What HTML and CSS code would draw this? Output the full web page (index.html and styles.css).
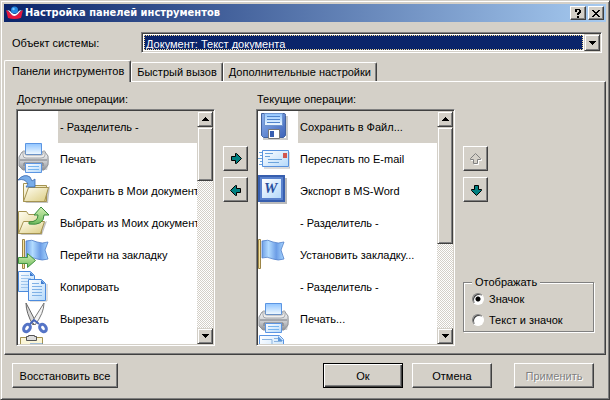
FILE: index.html
```html
<!DOCTYPE html>
<html lang="ru">
<head>
<meta charset="utf-8">
<title>Настройка панелей инструментов</title>
<link rel="stylesheet" href="styles.css">
</head>
<body>
<svg class="sprite" aria-hidden="true">
  <defs>
    <linearGradient id="blue" x1="0" y1="0" x2="0" y2="1"><stop offset="0" stop-color="#8fc4ff"/><stop offset="1" stop-color="#f2faff"/></linearGradient>
    <linearGradient id="paper" x1="0" y1="0" x2="1" y2="1"><stop offset="0" stop-color="#ffffff"/><stop offset="1" stop-color="#b4d9fb"/></linearGradient>
    <linearGradient id="metal" x1="0" y1="0" x2="0" y2="1"><stop offset="0" stop-color="#f6f6f6"/><stop offset=".55" stop-color="#c9cbce"/><stop offset="1" stop-color="#8d9095"/></linearGradient>
    <linearGradient id="folder" x1="0" y1="0" x2="1" y2="1"><stop offset="0" stop-color="#fffdf0"/><stop offset="1" stop-color="#dccd83"/></linearGradient>
    <linearGradient id="cloth" x1="0" y1="0" x2="1" y2="0"><stop offset="0" stop-color="#6fa0e6"/><stop offset=".3" stop-color="#b3dcff"/><stop offset=".65" stop-color="#6c9de6"/><stop offset="1" stop-color="#a8d6ff"/></linearGradient>
    <linearGradient id="disk" x1="0" y1="0" x2="1" y2="1"><stop offset="0" stop-color="#8fb4ee"/><stop offset="1" stop-color="#3c62b8"/></linearGradient>
    <linearGradient id="green" x1="0" y1="0" x2="0" y2="1"><stop offset="0" stop-color="#d3f0b4"/><stop offset="1" stop-color="#6fbb5c"/></linearGradient>
  </defs>
  <symbol id="printer" viewBox="0 0 32 32">
    <path d="M3 27h26l2-9-1-6-3-1z" fill="#999" opacity=".5"/>
    <path d="M4 9h23l3 4v9l-4 5H5l-4-4v-9z" fill="url(#metal)" stroke="#92959a"/>
    <path d="M7.500.500h16v11h-16z" fill="url(#blue)" stroke="#5b95e2"/>
    <path d="M5 8v4q0 3 3 3h15q4 0 4-3V8h-2v3q0 1-2 1H9q-2 0-2-1V8z" fill="#eee" stroke="#8b8e93" stroke-width=".7"/>
    <path d="M2 17h27M6 23v-3h19v3" fill="none" stroke="#777b82"/>
    <path d="M7.500 20.500h16v9h-16z" fill="url(#paper)" stroke="#5b95e2"/>
    <path d="M10 23.500h11M10 26.500h11" stroke="#76b4f0"/>
  </symbol>
  <symbol id="folder-in" viewBox="0 0 32 32">
    <path d="M7 28h23l2-17z" fill="#888" opacity=".5"/>
    <path d="M5.500 26.500V8.500h8l2 2h13v16z" fill="url(#folder)" stroke="#a49351"/>
    <path d="M5.500 26.500l5-14h20l-4 14z" fill="url(#folder)" stroke="#a49351"/>
    <path d="M0 5Q6-2 12 2l2 4 3-2v8H8l2-3Q7 3 0 5z" fill="#78ade9" stroke="#3868b0" stroke-width=".8"/>
  </symbol>
  <symbol id="folder-out" viewBox="0 0 32 32">
    <path d="M2 28h22l5-14z" fill="#888" opacity=".5"/>
    <path d="M.500 26.500v-22h8l2 3h13v19z" fill="url(#folder)" stroke="#a49351"/>
    <path d="M.500 26.500l5-12h21l-4 12z" fill="url(#folder)" stroke="#a49351"/>
    <path d="M11 15Q20 15 20 8h-4l7-8 8 8h-5q0 11-15 9z" fill="url(#green)" stroke="#398a3d"/>
  </symbol>
  <symbol id="flag-go" viewBox="0 0 32 32">
    <path d="M4.500.500h2v29h-2z" fill="#f6e4a0" stroke="#9c8547"/>
    <path d="M8 2q6-2 11 1 5 2 11 0l-3 8 3 9q-6 2-11 0-6-3-11-1z" fill="url(#cloth)" stroke="#517fc9" stroke-width=".8"/>
    <path d="M.500 18.500h9v-4l8 7-8 7v-4h-9z" fill="url(#green)" stroke="#439542"/>
  </symbol>
  <symbol id="flag" viewBox="0 0 32 32">
    <path d="M.500.500h2v29h-2z" fill="#f6e4a0" stroke="#9c8547"/>
    <path d="M4 2q6-2 11 1 5 2 11 0l-3 8 3 9q-6 2-11 0-6-3-11-1z" fill="url(#cloth)" stroke="#517fc9" stroke-width=".8"/>
  </symbol>
  <symbol id="copy" viewBox="0 0 32 32">
    <path d="M.500.500h12l4 4v16H.500z" fill="url(#paper)" stroke="#4c8bdd"/>
    <path d="M12 1v4h4z" fill="#3d7bd0"/><path d="M3 4.500h8M3 7.500h10M3 10.500h10M3 13.500h8M3 16.500h8" stroke="#9fc5ec"/>
    <path d="M12 30h17V13" fill="none" stroke="#999" opacity=".6"/>
    <path d="M10.500 8.500h13l4 4v17h-17z" fill="url(#paper)" stroke="#4c8bdd"/>
    <path d="M23 9v4h4z" fill="#3d7bd0"/><path d="M14 12.500h7M14 15.500h10M14 18.500h10M14 21.500h10M14 24.500h10" stroke="#7fb1e6"/>
  </symbol>
  <symbol id="cut" viewBox="0 0 32 32">
    <path d="M8 0l10 19-3 3Q8 10 8 0z" fill="#d8d8d8" stroke="#666"/>
    <path d="M26 0L14 19l3 3Q26 10 26 0z" fill="#f4f4f4" stroke="#777"/>
    <ellipse cx="9" cy="25" rx="3" ry="4" transform="rotate(35 9 25)" fill="none" stroke="#5574c6" stroke-width="3"/>
    <ellipse cx="25" cy="25" rx="3" ry="4" transform="rotate(-35 25 25)" fill="none" stroke="#5574c6" stroke-width="3"/>
    <path d="M12 21l4-4 5 4" fill="none" stroke="#4565b9" stroke-width="2"/>
  </symbol>
  <symbol id="paste" viewBox="0 0 32 32">
    <path d="M2.500 2.500h22v27h-22z" fill="#fbf6d8" stroke="#a49351"/>
    <path d="M8.500 1.500h2v-1h6v1h2v4h-10z" fill="#ddd" stroke="#555"/><path d="M12 9h13v18H12z" fill="url(#paper)" stroke="#4c8bdd"/>
  </symbol>
  <symbol id="save" viewBox="0 0 32 32">
    <path d="M5 28h24V5" fill="none" stroke="#999" stroke-width="2" opacity=".5"/>
    <path d="M3.500 2.500h23q1 0 1 2v20l-2 2h-20l-2-2z" fill="url(#disk)" stroke="#41629f"/>
    <path d="M6.500 2.500h18v12h-18z" fill="url(#blue)" stroke="#6f95cf"/>
    <path d="M9 5.500h13M9 8.500h13M9 11.500h13" stroke="#4f84cc"/>
    <path d="M10.500 18.500h11v9h-11z" fill="#fff" stroke="#777"/><path d="M12 20h4v6h-4z" fill="#385eb0"/>
  </symbol>
  <symbol id="mail" viewBox="0 0 32 32">
    <path d="M6 25h26V9" fill="none" stroke="#888" opacity=".6"/>
    <path d="M4.500 7.500h26v16h-26z" fill="url(#paper)" stroke="#5791dd"/>
    <path d="M1 9.500h3M2 12.500h2M0 15.500h4M2 18.500h2M1 21.500h3M7 10.500h8M7 13.500h5M10 16.500h14M10 19.500h11" stroke="#6ca4dc"/>
    <path d="M25 10h4v5h-4z" fill="#d2564e"/>
  </symbol>
  <symbol id="word" viewBox="0 0 32 32">
    <path d="M2 28h26V3" fill="none" stroke="#777" stroke-width="2" opacity=".5"/>
    <path d="M1 1h25v25H1z" fill="#5a82cd" stroke="#365eae" stroke-width="2"/>
    <path d="M4 4h19v19H4z" fill="url(#paper)"/>
    <text class="word-mark" x="6" y="18">W</text>
  </symbol>
  <symbol id="preview" viewBox="0 0 32 32">
    <path d="M1.500.500h20l4 4v24h-24z" fill="url(#paper)" stroke="#5b95e2"/><path d="M4 4.500h10v8H4M16 3.500h4M16 6.500h8" fill="none" stroke="#8cb4df"/><path d="M20 1v5h5z" fill="#5c98dd"/>
  </symbol>
  <symbol id="arrow" viewBox="0 0 12 12"><path d="M1.500 3.500h4v-3h1l5 5-5 5h-1v-3h-4z"/></symbol>
  <symbol id="tri-up" viewBox="0 0 7 4"><path d="M3 0h1v1h1v1h1v1h1v1H0V3h1V2h1V1h1z"/></symbol>
  <symbol id="tri-down" viewBox="0 0 7 4"><path d="M3 4h1V3h1V2h1V1h1V0H0v1h1v1h1v1h1z"/></symbol>
</svg>

<main class="dialog">
  <header class="titlebar">
    <svg class="logo" viewBox="0 0 17 14" aria-hidden="true"><path d="M0 4q3 1 5 4 4 3 7 0 2-3 5-4l-2 8q-7 2-13 0z" fill="#e5173d"/><path d="M1 4q3 0 5 3 3 2 5 0 2-3 5-3-2 1-4 4-4 4-7 0Q3 5 1 4z" fill="#fff"/><circle cx="8.500" cy="4" r="3.500" fill="#2489e0"/><circle cx="7.500" cy="3" r="1.200" fill="#7cc5ff"/></svg>
    <h1>Настройка панелей инструментов</h1>
    <button class="caption-btn" type="button" aria-label="Справка"><svg viewBox="0 0 8 9"><path d="M1 0h5v1h1v3H6v1H5v1H3V4h1V3h1V1H3v2H1zM3 7h2v2H3z"/></svg></button>
    <button class="caption-btn" type="button" aria-label="Закрыть"><svg viewBox="0 0 8 9"><path d="M0 1h2v1h1v1h2V2h1V1h2v1H7v1H6v1H5v1h1v1h1v1h1v1H6V7H5V6H3v1H2v1H0V7h1V6h1V5h1V4H2V3H1V2H0z"/></svg></button>
  </header>

  <div class="object-row">
    <label for="object">Объект системы:</label>
    <div class="combo">
      <select id="object"><option>Документ: Текст документа</option></select>
      <span class="combo-arrow"><svg class="tri"><use href="#tri-down"/></svg></span>
    </div>
  </div>

  <div class="tabs" role="tablist">
    <button class="tab active" type="button" role="tab" aria-selected="true">Панели инструментов</button>
    <button class="tab" type="button" role="tab">Быстрый вызов</button>
    <button class="tab" type="button" role="tab">Дополнительные настройки</button>
  </div>

  <section class="panel" role="tabpanel">
    <div class="column">
      <h2 id="available">Доступные операции:</h2>
      <div class="listbox">
        <ul role="listbox" aria-labelledby="available">
          <li role="option" aria-selected="true"><span class="icon"></span><span class="name">- Разделитель -</span></li>
          <li role="option"><svg class="icon"><use href="#printer"/></svg><span class="name">Печать</span></li>
          <li role="option"><svg class="icon"><use href="#folder-in"/></svg><span class="name">Сохранить в Мои документ</span></li>
          <li role="option"><svg class="icon"><use href="#folder-out"/></svg><span class="name">Выбрать из Моих документ</span></li>
          <li role="option"><svg class="icon"><use href="#flag-go"/></svg><span class="name">Перейти на закладку</span></li>
          <li role="option"><svg class="icon"><use href="#copy"/></svg><span class="name">Копировать</span></li>
          <li role="option"><svg class="icon"><use href="#cut"/></svg><span class="name">Вырезать</span></li>
          <li role="option"><svg class="icon"><use href="#paste"/></svg></li>
        </ul>
        <div class="scrollbar">
          <button type="button" aria-label="Вверх"><svg class="tri"><use href="#tri-up"/></svg></button>
          <div class="track"><div class="thumb short"></div></div>
          <button type="button" aria-label="Вниз"><svg class="tri"><use href="#tri-down"/></svg></button>
        </div>
      </div>
    </div>

    <div class="arrows">
      <button type="button" aria-label="Добавить"><svg class="arrow"><use href="#arrow"/></svg></button>
      <button type="button" aria-label="Убрать"><svg class="arrow left"><use href="#arrow"/></svg></button>
    </div>

    <div class="column">
      <h2 id="current">Текущие операции:</h2>
      <div class="listbox">
        <ul role="listbox" aria-labelledby="current">
          <li role="option" aria-selected="true"><svg class="icon"><use href="#save"/></svg><span class="name">Сохранить в Файл...</span></li>
          <li role="option"><svg class="icon"><use href="#mail"/></svg><span class="name">Переслать по E-mail</span></li>
          <li role="option"><svg class="icon"><use href="#word"/></svg><span class="name">Экспорт в MS-Word</span></li>
          <li role="option"><span class="icon"></span><span class="name">- Разделитель -</span></li>
          <li role="option"><svg class="icon"><use href="#flag"/></svg><span class="name">Установить закладку...</span></li>
          <li role="option"><span class="icon"></span><span class="name">- Разделитель -</span></li>
          <li role="option"><svg class="icon"><use href="#printer"/></svg><span class="name">Печать...</span></li>
          <li role="option"><svg class="icon"><use href="#preview"/></svg></li>
        </ul>
        <div class="scrollbar">
          <button type="button" aria-label="Вверх"><svg class="tri"><use href="#tri-up"/></svg></button>
          <div class="track"><div class="thumb long"></div></div>
          <button type="button" aria-label="Вниз"><svg class="tri"><use href="#tri-down"/></svg></button>
        </div>
      </div>
    </div>

    <div class="side">
      <div class="arrows">
        <button type="button" aria-label="Выше" disabled><svg class="arrow up"><use href="#arrow"/></svg></button>
        <button type="button" aria-label="Ниже"><svg class="arrow down"><use href="#arrow"/></svg></button>
      </div>
      <fieldset>
        <legend>Отображать</legend>
        <label><input type="radio" name="view" checked>Значок</label>
        <label><input type="radio" name="view">Текст и значок</label>
      </fieldset>
    </div>
  </section>

  <footer>
    <button class="push restore" type="button">Восстановить все</button>
    <button class="push default" type="button">Ок</button>
    <button class="push" type="button">Отмена</button>
    <button class="push apply" type="button" disabled>Применить</button>
  </footer>
</main>
</body>
</html>
```
FILE: styles.css
```css
* { box-sizing: border-box; }

:root {
  --face: #d4d0c8;
  --shadow: #808080;
  --dark: #404040;
  --navy: #0a246a;
}

body {
  margin: 0;
  background: var(--face);
  color: #000;
  font: 11px/16px "Liberation Sans", Arial, sans-serif;
}

.sprite { position: absolute; width: 0; height: 0; }

.dialog {
  display: flex;
  flex-direction: column;
  height: 100vh;
  padding: 2px;
  border: 1px solid var(--face);
  border-right-color: var(--dark);
  border-bottom-color: var(--dark);
  box-shadow: inset 1px 1px #fff, inset -1px -1px var(--shadow);
}

button {
  display: flex;
  align-items: center;
  justify-content: center;
  margin: 0;
  padding: 0;
  font: inherit;
  color: #000;
  background: var(--face);
  border: 1px solid;
  border-color: #fff var(--dark) var(--dark) #fff;
  box-shadow: inset -1px -1px var(--shadow);
}

.titlebar {
  display: flex;
  align-items: center;
  gap: 2px;
  height: 18px;
  margin: 1px;
  padding: 0 2px;
  background: linear-gradient(90deg, var(--navy), #a6caf0);
}

.logo { width: 17px; height: 14px; }

h1 {
  flex: 1;
  margin: 0;
  color: #fff;
  font: bold 11px/18px "DejaVu Sans Condensed", "DejaVu Sans", sans-serif;
  font-stretch: condensed;
  white-space: nowrap;
}

.caption-btn { width: 16px; height: 14px; }
.caption-btn svg { width: 8px; height: 9px; shape-rendering: crispEdges; }

.object-row {
  display: grid;
  grid-template-columns: 129px 1fr;
  align-items: center;
  margin: 9px 5px 7px 9px;
}

.combo {
  display: flex;
  height: 21px;
  padding: 1px;
  background: #fff;
  border: 1px solid;
  border-color: var(--shadow) #fff #fff var(--shadow);
  box-shadow: inset 1px 1px var(--dark), inset -1px -1px var(--face);
}

select {
  flex: 1;
  min-width: 0;
  margin: 1px;
  padding: 0 1px;
  appearance: none;
  border: 1px dotted #f5db95;
  border-radius: 0;
  background: var(--navy);
  color: #fff;
  font: inherit;
}

.combo-arrow {
  display: flex;
  align-items: center;
  justify-content: center;
  width: 16px;
  background: var(--face);
  border: 1px solid;
  border-color: var(--face) var(--dark) var(--dark) var(--face);
  box-shadow: inset 1px 1px #fff, inset -1px -1px var(--shadow);
}

.tri { width: 7px; height: 4px; shape-rendering: crispEdges; }

.tabs {
  display: flex;
  align-items: flex-end;
  margin-left: 1px;
}

.tab {
  height: 19px;
  padding: 0 5px;
  border-bottom: 0;
  border-radius: 2px 2px 0 0;
  box-shadow: inset -1px 0 var(--shadow);
}

.tab.active {
  height: 22px;
  margin-bottom: -1px;
  padding: 0 6px 2px 7px;
  position: relative;
}

.panel {
  flex: 1;
  min-height: 0;
  display: grid;
  grid-template-columns: minmax(0, 1fr) 25px minmax(0, 1fr) 131px;
  grid-template-rows: minmax(0, 1fr);
  gap: 8px;
  margin: 0 1px;
  padding: 9px 11px 8px;
  border: 1px solid;
  border-color: #fff var(--dark) var(--dark) #fff;
  box-shadow: inset -1px -1px var(--shadow);
}

.column { display: flex; flex-direction: column; min-height: 0; }

h2 { margin: 0 0 2px; padding-left: 1px; font: inherit; }

.listbox {
  flex: 1;
  min-height: 0;
  display: flex;
  padding: 1px;
  background: #fff;
  border: 1px solid;
  border-color: var(--shadow) #fff #fff var(--shadow);
  box-shadow: inset 1px 1px var(--dark), inset -1px -1px var(--face);
}

ul {
  flex: 1;
  min-width: 0;
  margin: 0;
  padding: 0;
  overflow: hidden;
  list-style: none;
}

li { display: flex; height: 32px; }
.icon { flex: none; width: 32px; height: 32px; margin-right: 8px; }

.name {
  flex: 1;
  padding-left: 2px;
  line-height: 32px;
  white-space: nowrap;
}

li[aria-selected="true"] .name { background: var(--face); }
.word-mark { font: italic bold 15px "Liberation Serif", serif; fill: #284f9e; }

.scrollbar { display: flex; flex-direction: column; width: 16px; }

.scrollbar button,
.thumb {
  flex: none;
  height: 16px;
  background: var(--face);
  border: 1px solid;
  border-color: var(--face) var(--dark) var(--dark) var(--face);
  box-shadow: inset 1px 1px #fff, inset -1px -1px var(--shadow);
}

.track {
  flex: 1;
  background: repeating-conic-gradient(#fff 0 25%, var(--face) 0 50%) 0 0 / 2px 2px;
}

.thumb.short { height: 27%; }
.thumb.long { height: 58%; }

.arrows {
  display: flex;
  flex-direction: column;
  gap: 6px;
  padding-top: 55px;
}

.arrows button { width: 25px; height: 25px; }

.arrow { width: 12px; height: 12px; fill: #008080; stroke: #000; }
.arrow.left { transform: rotate(180deg); }
.arrow.up { transform: rotate(-90deg); }
.arrow.down { transform: rotate(90deg); }

button:disabled { color: var(--shadow); text-shadow: 1px 1px #fff; }
button:disabled .arrow { fill: var(--face); stroke: var(--shadow); filter: drop-shadow(-1px 1px #fff); }

.side { display: flex; flex-direction: column; justify-content: space-between; }

fieldset {
  display: flex;
  flex-direction: column;
  gap: 5px;
  margin: 0 0 14px;
  padding: 1px 8px 3px;
  border: 1px solid var(--shadow);
  box-shadow: 1px 1px #fff, inset 1px 1px #fff;
}

legend { padding: 0 3px; background: var(--face); }

fieldset label { display: flex; align-items: center; gap: 5px; }

input[type="radio"] {
  appearance: none;
  width: 12px;
  height: 12px;
  margin: 0;
  border: 1px solid;
  border-color: var(--shadow) #fff #fff var(--shadow);
  border-radius: 50%;
  background: #fff;
  box-shadow: inset 1px 1px var(--dark);
}

input[type="radio"]:checked { background: radial-gradient(circle, #000 2px, #fff 3px); }

footer {
  display: flex;
  gap: 9px;
  padding: 8px 13px 9px 9px;
}

.push { width: 80px; height: 25px; }
.push.restore { width: 106px; margin-right: auto; }
.push.default { border-color: #000; box-shadow: inset 1px 1px #fff, inset -1px -1px var(--dark), inset -2px -2px var(--shadow); }
.push.apply { margin-left: 13px; }
```
